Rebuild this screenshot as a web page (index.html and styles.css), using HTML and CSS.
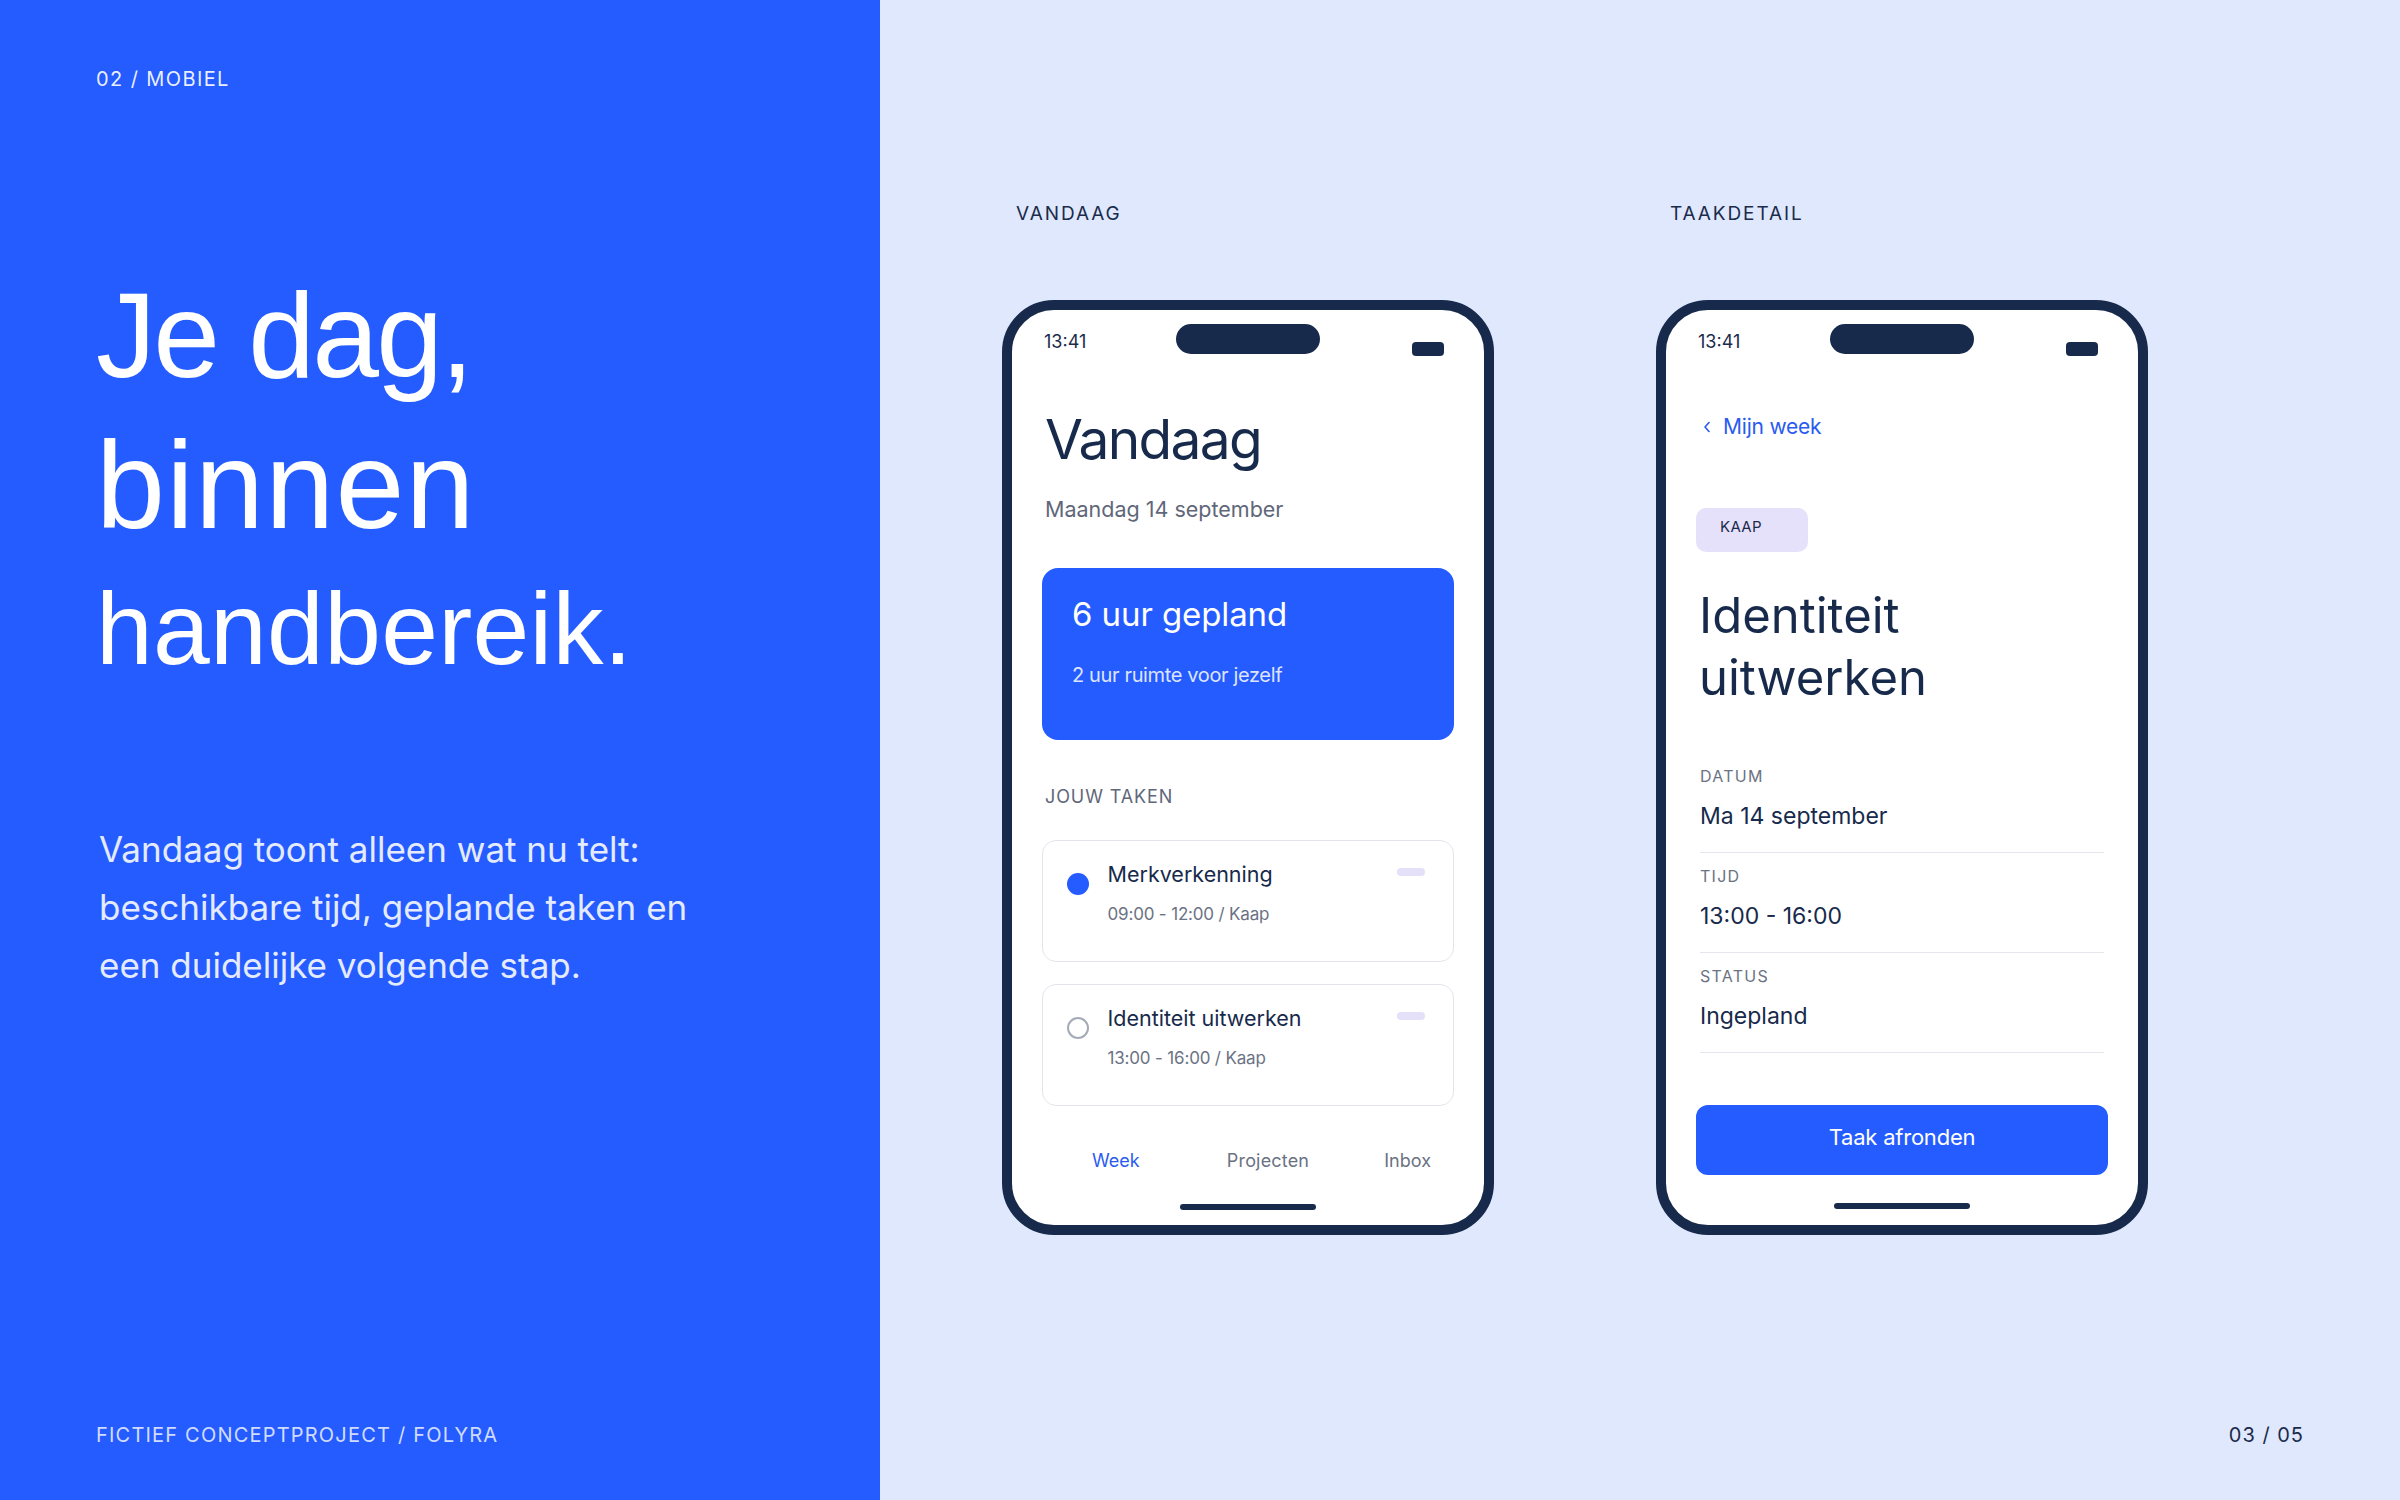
FILE: index.html
```html
<!DOCTYPE html>
<html lang="nl">
<head>
<meta charset="utf-8">
<title>Folyra — Mobiel</title>
<link rel="stylesheet" href="styles.css">
</head>
<body>
<main class="slide">
  <section class="intro">
    <div class="eyebrow">02 / MOBIEL</div>
    <h1 class="headline">
      <span class="line one">Je dag,</span>
      <span class="line two">binnen</span>
      <span class="line three">handbereik.</span>
    </h1>
    <p class="lede">Vandaag toont alleen wat nu telt:<br>beschikbare tijd, geplande taken en<br>een duidelijke volgende stap.</p>
    <div class="foot">FICTIEF CONCEPTPROJECT / FOLYRA</div>
  </section>

  <section class="showcase">
    <div class="screens">
      <div class="screen-col">
        <div class="screen-label">VANDAAG</div>
        <div class="phone">
          <div class="status">
            <span class="time">13:41</span>
            <span class="island"></span>
            <span class="battery"></span>
          </div>
          <h2 class="today-title">Vandaag</h2>
          <p class="today-date">Maandag 14 september</p>
          <div class="plan-card">
            <div class="plan-title">6 uur gepland</div>
            <div class="plan-sub">2 uur ruimte voor jezelf</div>
          </div>
          <div class="section-label">JOUW TAKEN</div>
          <div class="task">
            <span class="check done"></span>
            <div class="task-text">
              <div class="task-title">Merkverkenning</div>
              <div class="task-meta">09:00 - 12:00 / Kaap</div>
            </div>
            <span class="task-pill"></span>
          </div>
          <div class="task second">
            <span class="check"></span>
            <div class="task-text">
              <div class="task-title">Identiteit uitwerken</div>
              <div class="task-meta">13:00 - 16:00 / Kaap</div>
            </div>
            <span class="task-pill"></span>
          </div>
          <nav class="tabbar">
            <span class="tab active">Week</span>
            <span class="tab middle">Projecten</span>
            <span class="tab">Inbox</span>
          </nav>
          <span class="home-bar"></span>
        </div>
      </div>

      <div class="screen-col">
        <div class="screen-label">TAAKDETAIL</div>
        <div class="phone">
          <div class="status">
            <span class="time">13:41</span>
            <span class="island"></span>
            <span class="battery"></span>
          </div>
          <div class="back">
            <svg class="chev" width="8" height="12" viewBox="0 0 8 12"><path d="M6 1.5 L2 6 L6 10.5" fill="none" stroke="#2A5BF0" stroke-width="1.6" stroke-linecap="round" stroke-linejoin="round"/></svg>
            <span>Mijn week</span>
          </div>
          <span class="tag">KAAP</span>
          <h2 class="detail-title">Identiteit<br>uitwerken</h2>
          <div class="fields">
            <div class="field">
              <div class="field-label">DATUM</div>
              <div class="field-value">Ma 14 september</div>
            </div>
            <div class="field">
              <div class="field-label">TIJD</div>
              <div class="field-value">13:00 - 16:00</div>
            </div>
            <div class="field">
              <div class="field-label">STATUS</div>
              <div class="field-value">Ingepland</div>
            </div>
          </div>
          <div class="cta">Taak afronden</div>
          <span class="home-bar detail"></span>
        </div>
      </div>
    </div>
    <div class="pager">03 / 05</div>
  </section>
</main>
</body>
</html>
```

FILE: styles.css
```css
* {
  box-sizing: border-box;
  margin: 0;
  padding: 0;
}

html, body {
  width: 2400px;
  height: 1500px;
  overflow: hidden;
}

body {
  margin: 0;
  font-family: Inter, "Noto Sans", sans-serif;
  color: #172A4B;
}

.slide {
  display: grid;
  grid-template-columns: 880px 1fr;
  height: 1500px;
}

/* ---------- left intro panel ---------- */
.intro {
  background: #255CFF;
  color: #fff;
  display: flex;
  flex-direction: column;
  padding: 67px 0 53px 96px;
}

.eyebrow {
  font-size: 20px;
  line-height: 24px;
  letter-spacing: 0.07em;
  color: rgba(255, 255, 255, 0.92);
}

.headline {
  margin-top: 169px;
  font-family: "Liberation Sans", Arial, sans-serif;
  font-weight: 400;
  color: #fff;
}

.headline .line {
  display: block;
  line-height: 150px;
}

.headline .one {
  font-size: 120px;
  letter-spacing: -0.022em;
}

.headline .two {
  font-size: 124px;
  letter-spacing: 0.01em;
}

.headline .three {
  font-size: 102px;
  line-height: 138px;
  letter-spacing: 0.003em;
}

.lede {
  margin-top: 122px;
  margin-left: 3px;
  font-size: 35px;
  line-height: 58px;
  letter-spacing: 0;
  color: #E4EBFF;
}

.foot {
  margin-top: auto;
  font-size: 20px;
  line-height: 24px;
  letter-spacing: 0.06em;
  color: rgba(255, 255, 255, 0.8);
}

/* ---------- right showcase ---------- */
.showcase {
  background: #DFE8FD;
  display: flex;
  flex-direction: column;
  padding: 202px 0 53px 136px;
}

.screens {
  display: grid;
  grid-template-columns: 464px 464px;
  column-gap: 190px;
}

.screen-col {
  display: flex;
  flex-direction: column;
}

.screen-label {
  font-size: 19px;
  line-height: 24px;
  letter-spacing: 0.1em;
  color: #1B2B4B;
}

.pager {
  margin-top: auto;
  align-self: flex-end;
  margin-right: 96px;
  font-size: 20px;
  line-height: 24px;
  letter-spacing: 0.05em;
  color: #1B2B4B;
}

/* ---------- phone ---------- */
.phone {
  margin: 74px -14px 0;
  width: 492px;
  height: 935px;
  border: 10px solid #172A4B;
  border-radius: 52px;
  background: #fff;
  padding: 14px 30px 0;
  display: flex;
  flex-direction: column;
}

.status {
  display: grid;
  grid-template-columns: 132px 144px 1fr;
  align-items: start;
  margin: 0 10px 0 2px;
}

.time {
  font-size: 18px;
  line-height: 24px;
  margin-top: 6px;
  color: #1B2B4B;
}

.island {
  height: 30px;
  border-radius: 15px;
  background: #172A4B;
}

.battery {
  justify-self: end;
  width: 32px;
  height: 14px;
  margin-top: 18px;
  border-radius: 4px;
  background: #172A4B;
}

.today-title {
  margin-top: 51px;
  margin-left: 3px;
  font-size: 55px;
  line-height: 64px;
  font-weight: 400;
  letter-spacing: -0.03em;
  color: #172A4B;
}

.today-date {
  margin-top: 23px;
  margin-left: 3px;
  font-size: 21.5px;
  line-height: 30px;
  color: #5F6779;
}

.plan-card {
  margin-top: 44px;
  height: 172px;
  border-radius: 16px;
  background: #255CFF;
  color: #fff;
  padding: 26px 30px 0;
}

.plan-title {
  font-size: 33px;
  line-height: 40px;
  letter-spacing: -0.003em;
}

.plan-sub {
  margin-top: 27px;
  font-size: 20px;
  line-height: 28px;
  letter-spacing: -0.018em;
  color: rgba(255, 255, 255, 0.86);
}

.section-label {
  margin-top: 45px;
  margin-left: 3px;
  font-size: 18px;
  line-height: 24px;
  letter-spacing: 0.05em;
  color: #5F6779;
}

.task {
  margin-top: 31px;
  height: 122px;
  border: 1.5px solid #E2E5EC;
  border-radius: 14px;
  display: flex;
  align-items: flex-start;
  padding: 18.5px 28.5px 0 23.5px;
}

.task.second {
  margin-top: 22px;
}

.check {
  flex: none;
  width: 22px;
  height: 22px;
  margin-top: 13px;
  margin-right: 19px;
  border-radius: 50%;
  border: 2px solid #A5AAB7;
}

.check.done {
  border: none;
  background: #255CFF;
}

.task-text {
  flex: 1;
}

.task-title {
  font-size: 21.5px;
  line-height: 28px;
  color: #172A4B;
}

.task-meta {
  margin-top: 14px;
  font-size: 17px;
  line-height: 24px;
  letter-spacing: -0.01em;
  color: #6B7283;
}

.task-pill {
  flex: none;
  width: 28px;
  height: 8px;
  margin-top: 8px;
  border-radius: 4px;
  background: #E4E0FA;
}

.tabbar {
  margin-top: 43px;
  display: flex;
  justify-content: space-between;
  padding: 0 23px 0 50px;
  font-size: 18px;
  line-height: 24px;
  color: #6B7283;
}

.tab.middle {
  margin-left: 12px;
  letter-spacing: 0.01em;
}

.tab.active {
  color: #2A5BF0;
}

.home-bar {
  align-self: center;
  margin-top: 31px;
  width: 136px;
  height: 6px;
  border-radius: 3px;
  background: #172A4B;
}

.home-bar.detail {
  margin-top: 28px;
}

/* detail screen */
.back {
  margin-top: 57px;
  margin-left: 7px;
  display: flex;
  align-items: center;
  gap: 12px;
  font-size: 21px;
  line-height: 28px;
  letter-spacing: -0.01em;
  color: #2A5BF0;
}

.chev {
  display: block;
  flex: none;
}

.tag {
  margin-top: 67px;
  width: 112px;
  height: 44px;
  border-radius: 10px;
  background: #E6E1FB;
  padding-left: 24px;
  font-size: 15px;
  line-height: 38px;
  letter-spacing: 0.02em;
  color: #1B2B4B;
}

.detail-title {
  margin-top: 33px;
  margin-left: 3px;
  font-size: 49px;
  line-height: 62px;
  font-weight: 400;
  letter-spacing: 0;
  color: #172A4B;
}

.fields {
  margin: 44px 4px 0;
}

.field {
  padding: 13px 0 22px;
  border-bottom: 1px solid #E4E7ED;
}

.field-label {
  font-size: 16px;
  line-height: 20px;
  letter-spacing: 0.08em;
  color: #6B7283;
}

.field-value {
  margin-top: 16px;
  font-size: 23px;
  line-height: 28px;
  color: #172A4B;
}

.cta {
  margin-top: 52px;
  height: 70px;
  border-radius: 12px;
  background: #255CFF;
  color: #fff;
  text-align: center;
  font-size: 22px;
  line-height: 64px;
  letter-spacing: -0.01em;
}
```
